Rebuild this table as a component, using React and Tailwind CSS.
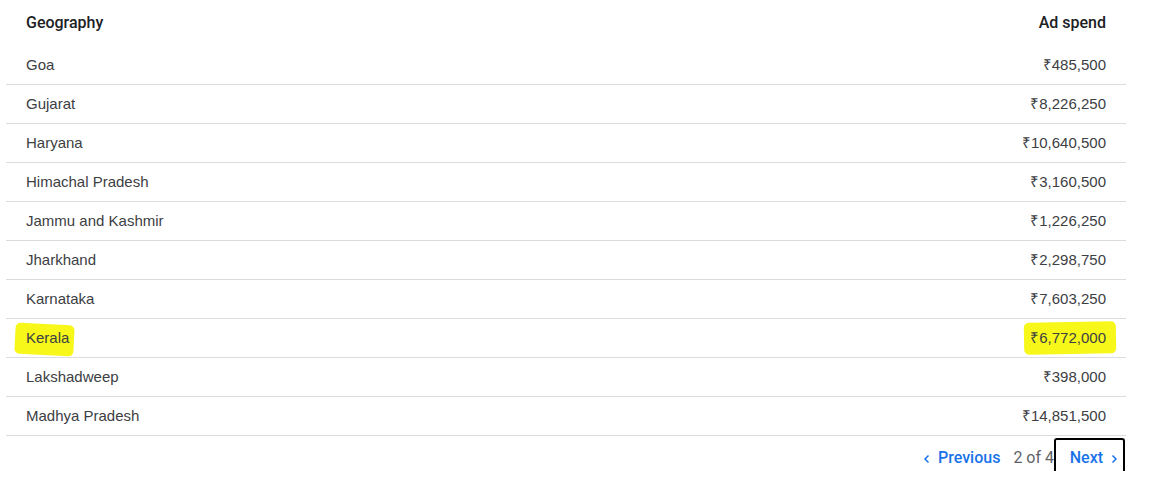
import React from 'react';

const rows = [
  ['Goa', '₹485,500'],
  ['Gujarat', '₹8,226,250'],
  ['Haryana', '₹10,640,500'],
  ['Himachal Pradesh', '₹3,160,500'],
  ['Jammu and Kashmir', '₹1,226,250'],
  ['Jharkhand', '₹2,298,750'],
  ['Karnataka', '₹7,603,250'],
  ['Kerala', '₹6,772,000', true],
  ['Lakshadweep', '₹398,000'],
  ['Madhya Pradesh', '₹14,851,500'],
];

function Chevron({ left }) {
  return (
    <svg width="8" height="10" viewBox="0 0 8 10" className="mt-[2px]">
      <path
        d={left ? 'M5.5 1.5 L2 5 L5.5 8.5' : 'M2.5 1.5 L6 5 L2.5 8.5'}
        fill="none"
        stroke="#1a73e8"
        strokeWidth="1.5"
      />
    </svg>
  );
}

export default function App() {
  return (
    <div className="w-[1164px] h-[493px] bg-white overflow-hidden font-['Liberation_Sans',Arial,sans-serif]">
      <div className="ml-[6px] w-[1120px]">
        {/* Header */}
        <div className="h-[46px] flex items-center justify-between px-[20px] pb-[1px] font-['Roboto',sans-serif] font-medium text-[16px] text-[#202124]">
          <span>Geography</span>
          <span>Ad spend</span>
        </div>

        {/* Rows */}
        {rows.map(([name, value, marked]) => (
          <div
            key={name}
            className="h-[39px] flex items-center justify-between px-[20px] border-b border-[#dadce0] text-[15px] text-[#3c4043]"
          >
            <span className="relative">
              {marked && (
                <span className="absolute left-[-11px] right-[-5px] top-[-3px] bottom-[-5px] bg-[#f7f71a] rounded-[5px] rotate-[3deg]" />
              )}
              <span className="relative">{name}</span>
            </span>
            <span className="relative">
              {marked && (
                <span className="absolute left-[-6px] right-[-10px] top-[-5px] bottom-[-4px] bg-[#f7f71a] rounded-[5px] -rotate-[1deg]" />
              )}
              <span className="relative">{value}</span>
            </span>
          </div>
        ))}

        {/* Pagination */}
        <div className="flex justify-end items-start pt-[1px] pr-[1px] font-['Roboto',sans-serif] text-[16px]">
          <div className="flex items-center h-[40px] pt-[2px] gap-[7px] text-[#1a73e8] font-medium mr-[13px]">
            <Chevron left />
            <span>Previous</span>
          </div>
          <div className="h-[40px] pt-[2px] flex items-center text-[#5f6368]">2 of 4</div>
          <div className="h-[33px] mt-[1px] w-[71px] border-l-2 border-t-2 border-r-2 border-black rounded-t-[3px] flex items-center justify-end pr-[5px] pt-[4px] gap-[7px] text-[#1a73e8] font-medium">
            <span>Next</span>
            <Chevron />
          </div>
        </div>
      </div>
    </div>
  );
}
